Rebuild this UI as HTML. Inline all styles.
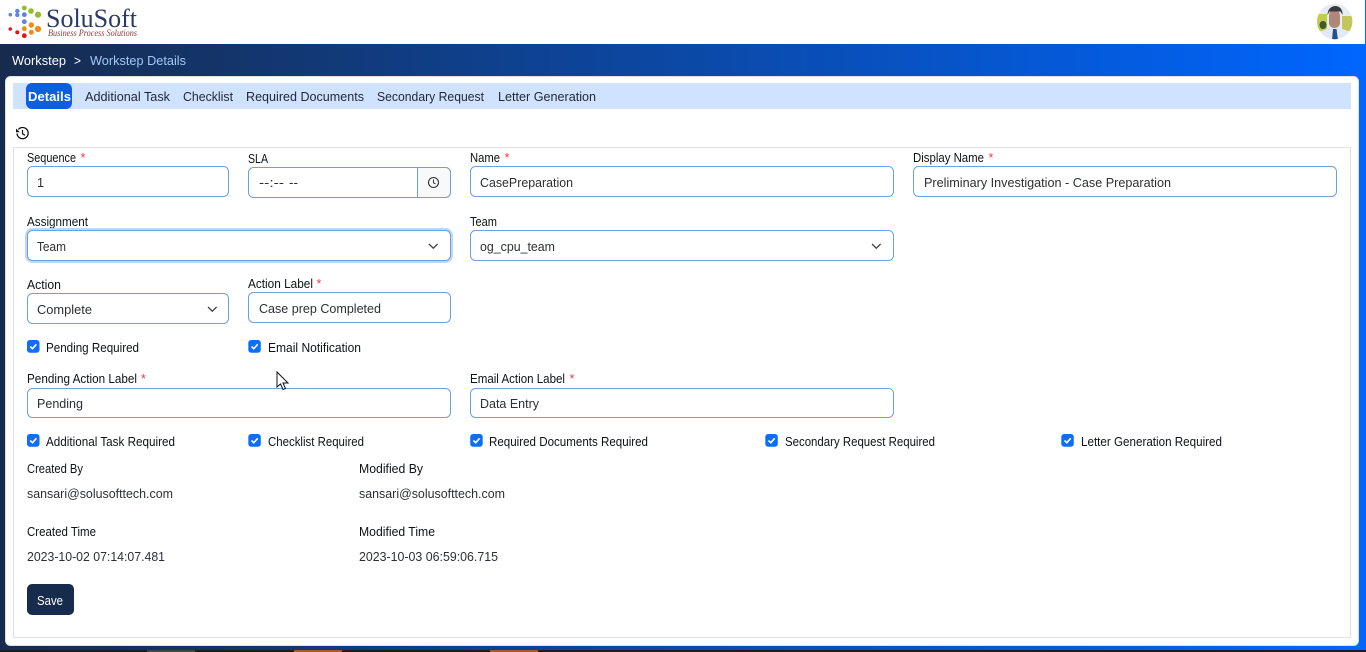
<!DOCTYPE html>
<html lang="en"><head><meta charset="utf-8"><title>Workstep Details</title>
<style>
html,body{margin:0;padding:0;width:1366px;height:652px;overflow:hidden;background:#fff}
svg{display:block}
text{font-family:"Liberation Sans",sans-serif;font-size:12.6px;fill:#0f1216}
.v{fill:#2b3036}
.s{fill:#f0384a}
.i{fill:#fff;stroke:#6ea1d8;stroke-width:1}
</style></head><body>
<svg width="1366" height="652" viewBox="0 0 1366 652" xmlns="http://www.w3.org/2000/svg">
<defs><linearGradient id="g" x1="0" y1="0" x2="1" y2="0"><stop offset="0" stop-color="#172b4d"/><stop offset="1" stop-color="#0066ff"/></linearGradient>
<g id="c"><rect x="0" y="0" width="12.500" height="12.700" rx="2.800" fill="#0d6efd"/><path d="M3.200 6.500l2.300 2.200L9.400 4.300" fill="none" stroke="#fff" stroke-width="1.600"/></g>
<path id="ch" d="M0 0.500l4.300 4.200L8.600 0.500" fill="none" stroke="#3c4248" stroke-width="1.300"/></defs>
<rect width="1366" height="652" fill="url(#g)"/>
<rect x="0" y="0" width="1365" height="44" fill="#fff"/>
<rect x="0" y="650" width="1366" height="2" fill="#1c1d20"/>
<rect x="147" y="650" width="48" height="2" fill="#444"/><rect x="294" y="650" width="48" height="2" fill="#a85a24"/><rect x="490" y="650" width="48" height="2" fill="#a85a24"/>

<!-- logo -->
<g fill="#5b86e0"><circle cx="10.300" cy="14.700" r="1.800"/><circle cx="17.300" cy="11" r="2.200"/><circle cx="17.300" cy="14.900" r="2.200"/><circle cx="24.300" cy="14.700" r="2.400"/><circle cx="24.300" cy="21.700" r="2.400"/></g>
<g fill="#95b92f"><circle cx="24.300" cy="8" r="2.400"/><circle cx="31" cy="11" r="2.800"/><circle cx="38" cy="14.700" r="3.100"/></g>
<g fill="#f08c14"><circle cx="31.300" cy="25" r="2.700"/><circle cx="38" cy="29" r="3.100"/><circle cx="31.300" cy="32.300" r="2.500"/><circle cx="24.300" cy="28.700" r="2.400"/></g>
<g fill="#e5141c"><circle cx="10.300" cy="29" r="1.800"/><circle cx="17.300" cy="32.300" r="2.100"/><circle cx="24.300" cy="35.700" r="2.400"/></g>
<text x="46" y="27" textLength="91" lengthAdjust="spacingAndGlyphs" style="font-family:'Liberation Serif',serif;font-size:26px;fill:#2c3a68">SoluSoft</text>
<text x="48" y="36" textLength="89" lengthAdjust="spacingAndGlyphs" style="font-family:'Liberation Serif',serif;font-size:9.500px;font-style:italic;fill:#8e3a3a">Business Process Solutions</text>

<!-- avatar -->
<clipPath id="av"><circle cx="1334.700" cy="21.500" r="17.700"/></clipPath>
<g clip-path="url(#av)"><rect x="1317" y="3" width="36" height="37" fill="#e6edf0"/>
<path d="M1317 14h10v17h-10z" fill="#c2cc4e"/><path d="M1342 16h11v15h-11z" fill="#c4c65c"/>
<ellipse cx="1323" cy="25" rx="3.500" ry="4" fill="#3f5a2c"/>
<path d="M1317 40v-7l12-5h11l13 5v7z" fill="#e2e9f6"/><path d="M1333 29h3.500l1.500 11h-6z" fill="#24508c"/>
<rect x="1329" y="10" width="11" height="18" rx="5" fill="#b08878"/><path d="M1327.500 15c0-12 16-12 15 0l-2-3.500h-11z" fill="#3a3a3e"/></g>

<!-- breadcrumb -->
<text x="12" y="65" textLength="54" lengthAdjust="spacingAndGlyphs" style="fill:#fff">Workstep</text>
<text x="74" y="65" textLength="7" lengthAdjust="spacingAndGlyphs" style="fill:#fff">&gt;</text>
<text x="90" y="65" textLength="96" lengthAdjust="spacingAndGlyphs" style="fill:#a3c8f5">Workstep Details</text>

<!-- card -->
<rect x="5.500" y="76.500" width="1353" height="569" rx="5" fill="#fff" stroke="#dde1e6"/>
<rect x="13" y="83" width="1338" height="26" fill="#cfe2ff"/>
<rect x="26" y="83" width="46" height="26" rx="6" fill="#0d5fe0"/>
<text x="28" y="101" textLength="43" lengthAdjust="spacingAndGlyphs" style="fill:#fff;font-weight:bold">Details</text>
<text x="85" y="101" textLength="85" lengthAdjust="spacingAndGlyphs" style="fill:#1f2833">Additional Task</text>
<text x="183" y="101" textLength="50" lengthAdjust="spacingAndGlyphs" style="fill:#1f2833">Checklist</text>
<text x="246" y="101" textLength="118" lengthAdjust="spacingAndGlyphs" style="fill:#1f2833">Required Documents</text>
<text x="377" y="101" textLength="107" lengthAdjust="spacingAndGlyphs" style="fill:#1f2833">Secondary Request</text>
<text x="498" y="101" textLength="98" lengthAdjust="spacingAndGlyphs" style="fill:#1f2833">Letter Generation</text>

<!-- history icon -->
<path d="M18.300 129.500a5.600 5.600 0 1 1-1.300 4" fill="none" stroke="#111" stroke-width="1.300"/>
<path d="M16 128.500v3.800h3.800z" fill="#111"/>
<path d="M22.500 130v3.800l2.500 1.500" fill="none" stroke="#111" stroke-width="1.200"/>

<!-- form frame -->
<rect x="13.500" y="147.500" width="1337" height="490" fill="#fff" stroke="#dfe2e6"/>

<!-- row 1 -->
<text x="27" y="162" textLength="49" lengthAdjust="spacingAndGlyphs">Sequence</text><text x="80.500" y="162" class="s">*</text>
<rect class="i" x="27.500" y="166.500" width="201" height="30" rx="5"/>
<text x="37" y="187" class="v">1</text>
<text x="248" y="163" textLength="20" lengthAdjust="spacingAndGlyphs">SLA</text>
<rect class="i" x="248.500" y="167.500" width="202" height="30" rx="5"/>
<path d="M417.500 167.500H445.500a5 5 0 0 1 5 5v20a5 5 0 0 1-5 5H417.500z" fill="#f8f9fa" stroke="#6ea1d8"/>
<circle cx="433.500" cy="182.500" r="5" fill="none" stroke="#333" stroke-width="1.100"/><path d="M433.500 179.500v3.300l2 1" fill="none" stroke="#333"/>
<text x="259" y="187" class="v" textLength="25" lengthAdjust="spacingAndGlyphs">--:--</text>
<text x="289" y="187" class="v" textLength="9" lengthAdjust="spacingAndGlyphs">--</text>
<text x="470" y="162" textLength="30" lengthAdjust="spacingAndGlyphs">Name</text><text x="504.500" y="162" class="s">*</text>
<rect class="i" x="470.500" y="166.500" width="423" height="30" rx="5"/>
<text x="480" y="187" class="v" textLength="93" lengthAdjust="spacingAndGlyphs">CasePreparation</text>
<text x="913" y="162" textLength="71" lengthAdjust="spacingAndGlyphs">Display Name</text><text x="988.500" y="162" class="s">*</text>
<rect class="i" x="913.500" y="166.500" width="423" height="30" rx="5"/>
<text x="924" y="187" class="v" textLength="247" lengthAdjust="spacingAndGlyphs">Preliminary Investigation - Case Preparation</text>

<!-- row 2 -->
<text x="27" y="226" textLength="61" lengthAdjust="spacingAndGlyphs">Assignment</text>
<rect x="27.500" y="230.500" width="423" height="30" rx="5" fill="#fff" stroke="#bdd6fa" stroke-width="5"/>
<rect class="i" x="27.500" y="230.500" width="423" height="30" rx="5"/>
<text x="37" y="251" class="v" textLength="29" lengthAdjust="spacingAndGlyphs">Team</text>
<use href="#ch" x="429" y="243.500"/>
<text x="470" y="226" textLength="27" lengthAdjust="spacingAndGlyphs">Team</text>
<rect class="i" x="470.500" y="230.500" width="423" height="30" rx="5"/>
<text x="480" y="251" class="v" textLength="75" lengthAdjust="spacingAndGlyphs">og_cpu_team</text>
<use href="#ch" x="872" y="243.500"/>

<!-- row 3 -->
<text x="27" y="289" textLength="34" lengthAdjust="spacingAndGlyphs">Action</text>
<rect class="i" x="27.500" y="293.500" width="201" height="30" rx="5"/>
<text x="37" y="314" class="v" textLength="55" lengthAdjust="spacingAndGlyphs">Complete</text>
<use href="#ch" x="208" y="306.500"/>
<text x="248" y="288" textLength="65" lengthAdjust="spacingAndGlyphs">Action Label</text><text x="316.500" y="288" class="s">*</text>
<rect class="i" x="248.500" y="292.500" width="202" height="30" rx="5"/>
<text x="259" y="313" class="v" textLength="122" lengthAdjust="spacingAndGlyphs">Case prep Completed</text>

<!-- checks 1 -->
<use href="#c" x="27" y="340"/><text x="46" y="352" textLength="93" lengthAdjust="spacingAndGlyphs">Pending Required</text>
<use href="#c" x="248.300" y="340"/><text x="268" y="352" textLength="93" lengthAdjust="spacingAndGlyphs">Email Notification</text>

<!-- row 4 -->
<text x="27" y="383" textLength="110" lengthAdjust="spacingAndGlyphs">Pending Action Label</text><text x="141" y="383" class="s">*</text>
<rect class="i" x="27.500" y="388.500" width="423" height="29" rx="5"/>
<text x="37" y="408" class="v" textLength="46" lengthAdjust="spacingAndGlyphs">Pending</text>
<text x="470" y="383" textLength="95" lengthAdjust="spacingAndGlyphs">Email Action Label</text><text x="569.500" y="383" class="s">*</text>
<rect class="i" x="470.500" y="388.500" width="423" height="29" rx="5"/>
<text x="480" y="408" class="v" textLength="59" lengthAdjust="spacingAndGlyphs">Data Entry</text>

<!-- checks 2 -->
<use href="#c" x="27" y="434"/><text x="46" y="446" textLength="129" lengthAdjust="spacingAndGlyphs">Additional Task Required</text>
<use href="#c" x="248.300" y="434"/><text x="268" y="446" textLength="96" lengthAdjust="spacingAndGlyphs">Checklist Required</text>
<use href="#c" x="470.200" y="434"/><text x="489" y="446" textLength="159" lengthAdjust="spacingAndGlyphs">Required Documents Required</text>
<use href="#c" x="765.300" y="434"/><text x="785" y="446" textLength="150" lengthAdjust="spacingAndGlyphs">Secondary Request Required</text>
<use href="#c" x="1061.300" y="434"/><text x="1081" y="446" textLength="141" lengthAdjust="spacingAndGlyphs">Letter Generation Required</text>

<!-- meta -->
<text x="27" y="473" textLength="56" lengthAdjust="spacingAndGlyphs">Created By</text>
<text x="359" y="473" textLength="64" lengthAdjust="spacingAndGlyphs">Modified By</text>
<text x="27" y="498" class="v" textLength="146" lengthAdjust="spacingAndGlyphs">sansari@solusofttech.com</text>
<text x="359" y="498" class="v" textLength="146" lengthAdjust="spacingAndGlyphs">sansari@solusofttech.com</text>
<text x="27" y="536" textLength="69" lengthAdjust="spacingAndGlyphs">Created Time</text>
<text x="359" y="536" textLength="76" lengthAdjust="spacingAndGlyphs">Modified Time</text>
<text x="27" y="561" class="v" textLength="138" lengthAdjust="spacingAndGlyphs">2023-10-02 07:14:07.481</text>
<text x="359" y="561" class="v" textLength="139" lengthAdjust="spacingAndGlyphs">2023-10-03 06:59:06.715</text>

<!-- save -->
<rect x="27" y="584" width="47" height="31" rx="5" fill="#172b4d"/>
<text x="37" y="605" textLength="26" lengthAdjust="spacingAndGlyphs" style="fill:#fff">Save</text>

<!-- cursor -->
<path d="M277 372v15l3.500-3 2.500 5.500 2.500-1-2.500-5.500h5z" fill="#fff" stroke="#111" stroke-width="1"/>
</svg>
</body></html>
